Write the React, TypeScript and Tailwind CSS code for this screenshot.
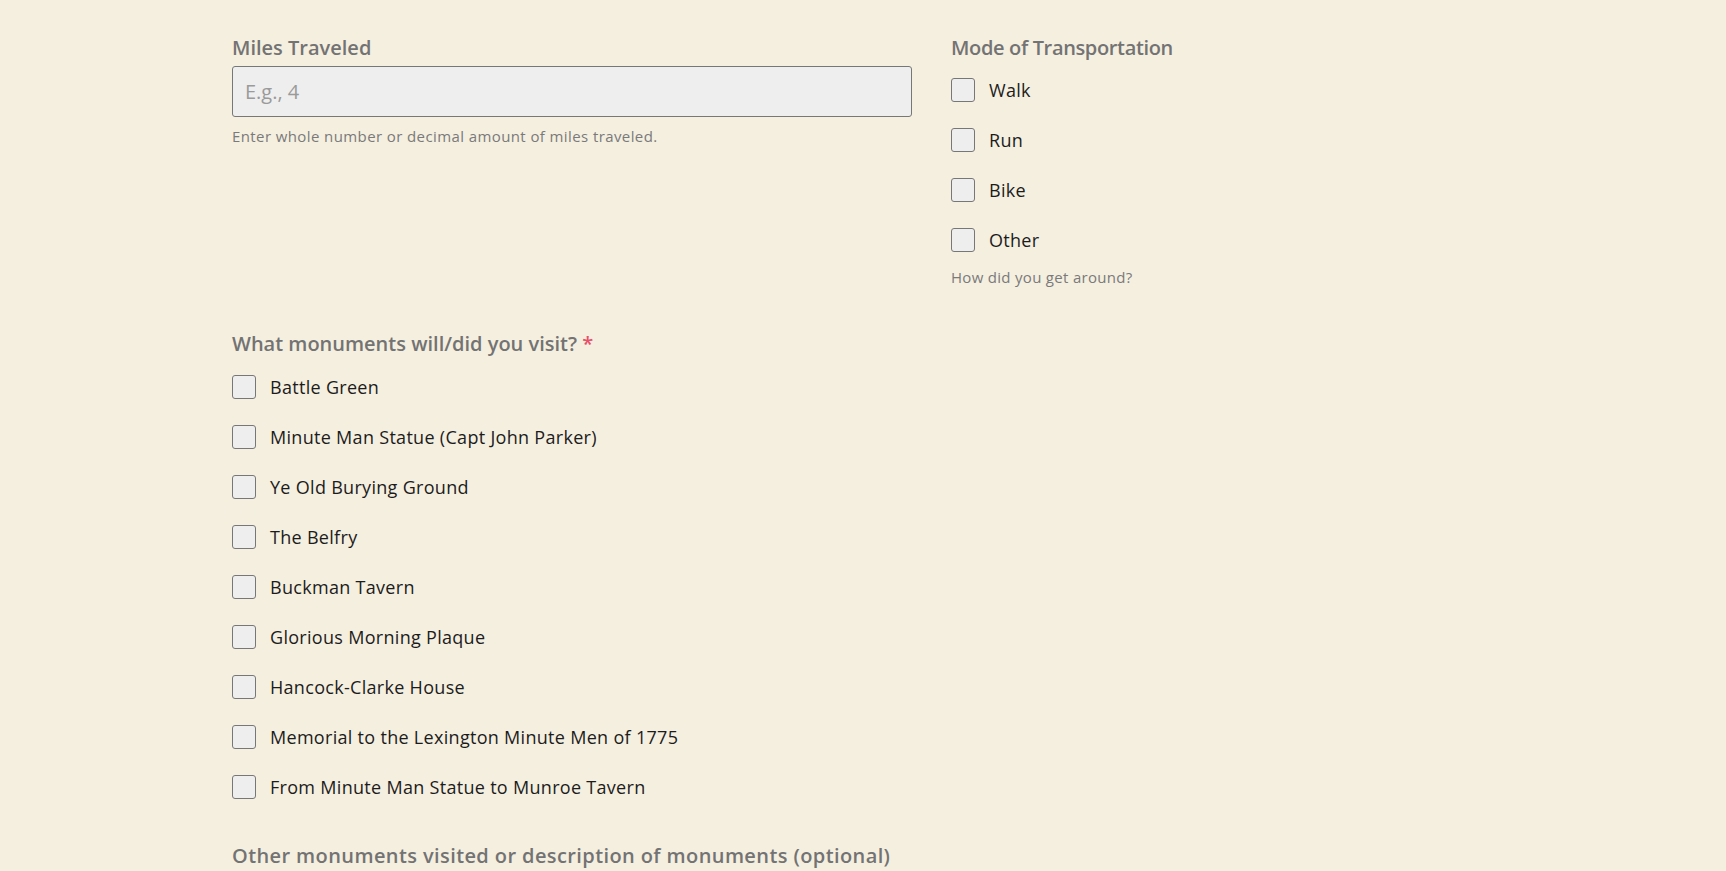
import { useState } from 'react';

const modes = ['Walk', 'Run', 'Bike', 'Other'];

const monuments = [
  'Battle Green',
  'Minute Man Statue (Capt John Parker)',
  'Ye Old Burying Ground',
  'The Belfry',
  'Buckman Tavern',
  'Glorious Morning Plaque',
  'Hancock-Clarke House',
  'Memorial to the Lexington Minute Men of 1775',
  'From Minute Man Statue to Munroe Tavern',
];

function Check({ label }: { label: string }) {
  const [on, setOn] = useState(false);
  return (
    <label className="flex h-[50px] cursor-pointer items-center gap-[14px]">
      <input
        type="checkbox"
        checked={on}
        onChange={() => setOn(!on)}
        className="h-[24px] w-[24px] shrink-0 appearance-none rounded-[3px] border-[1.5px] border-[#777777] bg-[#eeeeee] checked:bg-[#707070]"
      />
      <span className="text-[18px] leading-[24px] tracking-[0.3px] text-[#1c1c1c]">{label}</span>
    </label>
  );
}

export default function App() {
  return (
    <div
      className="min-h-screen bg-[#f5efe0] pl-[232px] pt-[34px]"
      style={{ fontFamily: '"Open Sans", "Liberation Sans", sans-serif' }}
    >
      <div className="grid grid-cols-[680px_1fr] gap-x-[39px]">
        <div>
          <div className="text-[20px] font-semibold leading-[28px] text-[#737373]">Miles Traveled</div>
          <input
            type="text"
            placeholder="E.g., 4"
            className="mt-[4px] h-[51px] w-full rounded-[3px] border border-[#777777] bg-[#eeeeee] px-[12px] text-[20px] text-[#333] placeholder:text-[#9a9a9a] outline-none"
          />
          <p className="mt-[8px] text-[15px] leading-[22px] tracking-[0.4px] text-[#7a7a7a]">
            Enter whole number or decimal amount of miles traveled.
          </p>
        </div>
        <div>
          <div className="text-[20px] font-semibold leading-[28px] tracking-[-0.35px] text-[#737373]">
            Mode of Transportation
          </div>
          <div className="mt-[3px] flex flex-col">
            {modes.map((m) => (
              <Check key={m} label={m} />
            ))}
          </div>
          <p className="mt-px text-[15px] leading-[22px] tracking-[0.3px] text-[#7a7a7a]">How did you get around?</p>
        </div>
      </div>

      <div className="mt-[42px]">
        <div className="text-[20px] font-semibold leading-[28px] text-[#737373]">
          What monuments will/did you visit? <span className="text-[#e8506a]">*</span>
        </div>
        <div className="mt-[4px] flex flex-col">
          {monuments.map((m) => (
            <Check key={m} label={m} />
          ))}
        </div>
      </div>

      <div className="mt-[30px] text-[20px] font-semibold leading-[28px] tracking-[0.4px] text-[#737373]">
        Other monuments visited or description of monuments (optional)
      </div>
    </div>
  );
}
